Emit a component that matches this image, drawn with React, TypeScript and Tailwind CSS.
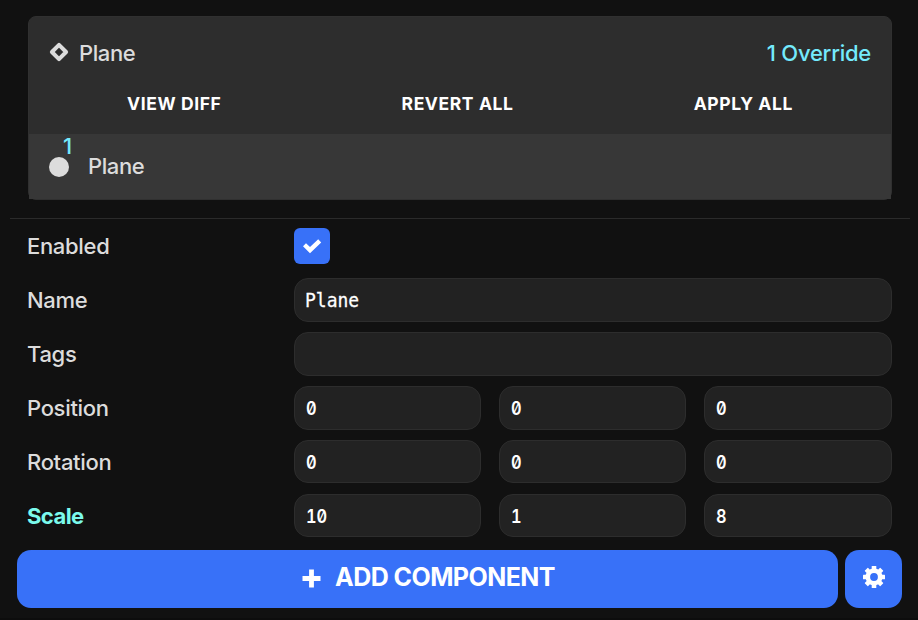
import type { ReactNode } from "react";

const fieldBase =
  "flex items-center overflow-hidden rounded-[14px] border border-[#2d2d2d] bg-[#222222] text-white";

function TextField({ value }: { value: string }) {
  return (
    <div className={`${fieldBase} h-full w-full pl-[10px]`}>
      <span className="inline-block origin-center scale-y-[1.07] font-['DejaVu_Sans_Mono',monospace] text-[18px] [-webkit-text-stroke:0.25px_white]">
        {value}
      </span>
    </div>
  );
}

function VectorFields({ values }: { values: string[] }) {
  return (
    <div className="grid h-full w-full grid-cols-[187px_187px_188px] gap-[18px]">
      {values.map((value, i) => (
        <div key={i} className={`${fieldBase} pt-[2px] pl-[11px]`}>
          <span className="inline-block origin-left scale-x-[0.86] font-['Inter',sans-serif] text-[19px] leading-[24px] font-semibold tabular-nums slashed-zero">
            {value}
          </span>
        </div>
      ))}
    </div>
  );
}

function Row({
  label,
  active,
  short,
  children,
}: {
  label: string;
  active?: boolean;
  short?: boolean;
  children: ReactNode;
}) {
  return (
    <div className="flex h-[54px] pt-[5px]">
      <div
        className={
          active
            ? "-ml-px w-[267px] text-[22px] leading-[44px] font-bold tracking-[-0.55px] text-[#7bfaec]"
            : "-ml-px w-[267px] text-[22px] leading-[44px] font-[460] tracking-[-0.32px] text-[#dcdcdc]"
        }
      >
        {label}
      </div>
      <div className={short ? "flex h-[43px] w-[598px] items-center" : "flex h-[44px] w-[598px] items-center"}>
        {children}
      </div>
    </div>
  );
}

function CheckMark() {
  return (
    <svg width="36" height="36" viewBox="0 0 36 36" fill="currentColor">
      <path d="M9 18.3 12 15.2 16 19 24.2 11.3 27.2 14.4 16 25.3Z" />
    </svg>
  );
}

const teeth = [0, 45, 90, 135, 180, 225, 270, 315];

function Gear() {
  return (
    <svg width="22" height="22" viewBox="0 0 22 22">
      <circle cx="11" cy="11" r="6.2" fill="none" stroke="currentColor" strokeWidth="4.6" />
      {teeth.map((angle) => (
        <rect key={angle} x="8.7" y="0" width="4.6" height="4.5" rx="0.5" fill="currentColor" transform={`rotate(${angle} 11 11)`} />
      ))}
    </svg>
  );
}

export default function App() {
  return (
    <div className="flex h-[620px] w-[918px] flex-col overflow-hidden border-b-2 border-[#0d0d0d] bg-[#111111] pt-4 font-['Inter',sans-serif] text-[#dcdcdc]">
      <section className="mx-7 flex h-[184px] w-[864px] shrink-0 flex-col rounded-[8px] border border-[#303030] bg-[#2d2d2d]">
        <div className="flex h-[72px] items-center justify-between px-5 text-[22px] font-[460]">
          <div className="flex items-center">
            <svg width="20" height="20" viewBox="0 0 20 20" className="mt-[-2px] mr-[10px]">
              <path d="M10 2.9 17.1 10 10 17.1 2.9 10Z" fill="none" stroke="currentColor" strokeWidth="4" strokeLinejoin="round" />
            </svg>
            <span className="tracking-[-0.42px]">Plane</span>
          </div>
          <span className="tracking-[-0.25px] text-[#74eafd]">1 Override</span>
        </div>
        <div className="flex h-[45px] items-start justify-around px-2 pt-[3px] text-[17.5px] leading-[24px] font-bold tracking-[0.6px] text-white">
          <button>VIEW DIFF</button>
          <button>REVERT ALL</button>
          <button>APPLY ALL</button>
        </div>
        <div className="flex h-[65px] items-center bg-[#373737] pl-5 text-[22px] font-[460]">
          <div className="relative mr-[19px] size-5 rounded-full bg-[#dcdcdc]">
            <span className="absolute top-[-27px] left-[14px] leading-[33px] text-[#74eafd]">1</span>
          </div>
          <span className="tracking-[-0.42px]">Plane</span>
        </div>
      </section>
      <hr className="mx-[10px] mt-[18px] w-[900px] border-t border-[#2b2b2b]" />
      <div className="ml-7 flex flex-col">
        <Row label="Enabled">
          <div className="size-9 rounded-[6px] bg-[#3871f8] text-white">
            <CheckMark />
          </div>
        </Row>
        <Row label="Name">
          <TextField value="Plane" />
        </Row>
        <Row label="Tags">
          <TextField value="" />
        </Row>
        <Row label="Position">
          <VectorFields values={["0", "0", "0"]} />
        </Row>
        <Row label="Rotation" short>
          <VectorFields values={["0", "0", "0"]} />
        </Row>
        <Row label="Scale" active short>
          <VectorFields values={["10", "1", "8"]} />
        </Row>
      </div>
      <div className="mt-[7px] ml-[17px] flex h-[58px] gap-[7px] text-white">
        <button className="flex w-[821px] items-center justify-center rounded-[14px] bg-[#3871f8] pb-[3px] pl-[2px] text-[25px] font-bold tracking-[-0.57px]">
          <svg width="19" height="19" viewBox="0 0 19 19" className="mt-[2px] mr-[14px]">
            <path d="M9.5 0.5V18.5M0.5 9.5H18.5" stroke="currentColor" strokeWidth="4.8" strokeLinecap="butt" />
          </svg>
          ADD COMPONENT
        </button>
        <button className="flex w-[57px] items-center justify-center rounded-[14px] bg-[#3871f8] pb-[4px]">
          <Gear />
        </button>
      </div>
    </div>
  );
}
